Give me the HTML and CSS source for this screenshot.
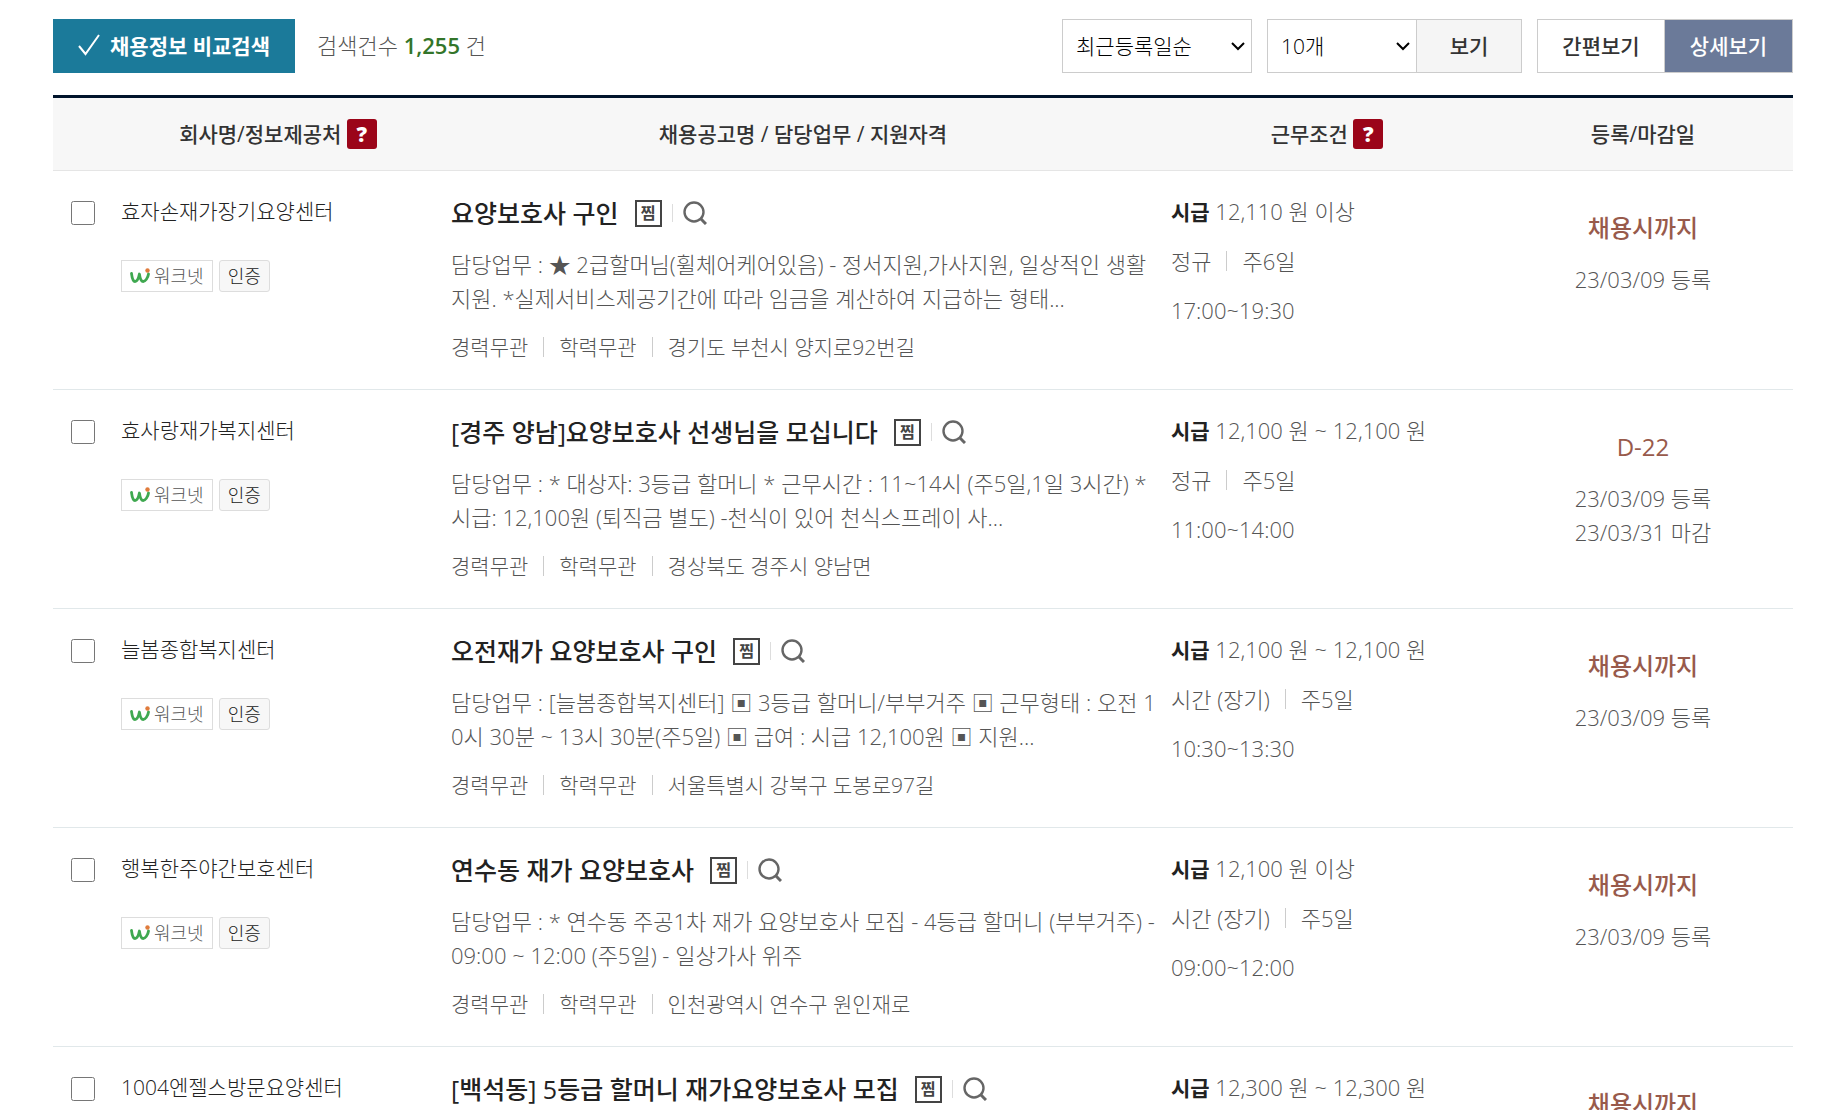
FILE: index.html
```html
<!DOCTYPE html>
<html lang="ko">

<head>
    <meta charset="UTF-8">
    <meta name="viewport" content="width=device-width, initial-scale=1.0">
    <title>채용정보 검색</title>
    <link rel="stylesheet" href="styles.css">
</head>

<body>
    <svg class="sprite" aria-hidden="true">
        <symbol id="ico-worknet" viewBox="0 0 20 16">
            <path d="M1.500 5.500C2 9.500 3.200 13.500 5 13.500S8.600 10 9.400 6C10 10 11.200 13.500 13.200 13.500S18 10 18.500 6" fill="none" stroke="#3fa850" stroke-width="2.800" stroke-linecap="round" stroke-linejoin="round"/>
            <circle cx="17.500" cy="2.500" r="2.200" fill="#e07b3c"/>
        </symbol>
        <symbol id="ico-search" viewBox="0 0 24 24">
            <circle cx="11" cy="11" r="9.500" fill="none" stroke="#666" stroke-width="2.400"/>
            <path d="M17.500 17.500L23 23" stroke="#666" stroke-width="3"/>
        </symbol>
    </svg>

    <div class="container">
        <div class="toolbar">
            <button type="button" class="btn-compare">
                <svg width="22" height="22" viewBox="0 0 22 22" aria-hidden="true"><path d="M1 12L7.500 20L21 1" fill="none" stroke="#fff" stroke-width="2"/></svg>
                채용정보 비교검색
            </button>
            <p class="total">검색건수 <strong>1,255</strong> 건</p>
            <div class="tools">
                <select class="sort" aria-label="정렬 순서">
                    <option>최근등록일순</option>
                </select>
                <div class="group">
                    <select class="count" aria-label="목록 개수">
                        <option>10개</option>
                    </select>
                    <button type="button" class="btn-view">보기</button>
                </div>
                <div class="group">
                    <button type="button" class="btn-tab">간편보기</button>
                    <button type="button" class="btn-tab active">상세보기</button>
                </div>
            </div>
        </div>

        <table class="list">
            <colgroup>
                <col class="col-check">
                <col class="col-company">
                <col class="col-title">
                <col class="col-cond">
                <col class="col-date">
            </colgroup>
            <thead>
                <tr>
                    <td></td>
                    <th scope="col">회사명/정보제공처 <button type="button" class="help">?</button></th>
                    <th scope="col">채용공고명 / 담당업무 / 지원자격</th>
                    <th scope="col">근무조건 <button type="button" class="help">?</button></th>
                    <th scope="col">등록/마감일</th>
                </tr>
            </thead>
            <tbody>
                <tr>
                    <td class="check"><input type="checkbox" aria-label="효자손재가장기요양센터 선택"></td>
                    <td class="company">
                        <a href="#">효자손재가장기요양센터</a>
                        <p class="badges"><span class="worknet"><svg width="20" height="16"><use href="#ico-worknet"/></svg>워크넷</span><span class="cert">인증</span></p>
                    </td>
                    <td class="job">
                        <div class="job-title"><a href="#">요양보호사 구인</a><button type="button" class="zzim">찜</button><i class="bar"></i><button type="button" class="search" aria-label="미리보기"><svg width="24" height="24"><use href="#ico-search"/></svg></button></div>
                        <p class="desc">담당업무 : ★ 2급할머님(휠체어케어있음) - 정서지원,가사지원, 일상적인 생활<br>지원. *실제서비스제공기간에 따라 임금을 계산하여 지급하는 형태...</p>
                        <p class="meta"><span>경력무관</span><span>학력무관</span><span>경기도 부천시 양지로92번길</span></p>
                    </td>
                    <td class="cond">
                        <p><strong>시급</strong> 12,110 원 이상</p>
                        <p class="meta"><span>정규</span><span>주6일</span></p>
                        <p>17:00~19:30</p>
                    </td>
                    <td class="date">
                        <strong>채용시까지</strong>
                        <p>23/03/09 등록</p>
                    </td>
                </tr>
                <tr>
                    <td class="check"><input type="checkbox" aria-label="효사랑재가복지센터 선택"></td>
                    <td class="company">
                        <a href="#">효사랑재가복지센터</a>
                        <p class="badges"><span class="worknet"><svg width="20" height="16"><use href="#ico-worknet"/></svg>워크넷</span><span class="cert">인증</span></p>
                    </td>
                    <td class="job">
                        <div class="job-title"><a href="#">[경주 양남]요양보호사 선생님을 모십니다</a><button type="button" class="zzim">찜</button><i class="bar"></i><button type="button" class="search" aria-label="미리보기"><svg width="24" height="24"><use href="#ico-search"/></svg></button></div>
                        <p class="desc">담당업무 : * 대상자: 3등급 할머니 * 근무시간 : 11~14시 (주5일,1일 3시간) *<br>시급: 12,100원 (퇴직금 별도) -천식이 있어 천식스프레이 사...</p>
                        <p class="meta"><span>경력무관</span><span>학력무관</span><span>경상북도 경주시 양남면</span></p>
                    </td>
                    <td class="cond">
                        <p><strong>시급</strong> 12,100 원 ~ 12,100 원</p>
                        <p class="meta"><span>정규</span><span>주5일</span></p>
                        <p>11:00~14:00</p>
                    </td>
                    <td class="date">
                        <strong>D-22</strong>
                        <p>23/03/09 등록</p>
                        <p>23/03/31 마감</p>
                    </td>
                </tr>
                <tr>
                    <td class="check"><input type="checkbox" aria-label="늘봄종합복지센터 선택"></td>
                    <td class="company">
                        <a href="#">늘봄종합복지센터</a>
                        <p class="badges"><span class="worknet"><svg width="20" height="16"><use href="#ico-worknet"/></svg>워크넷</span><span class="cert">인증</span></p>
                    </td>
                    <td class="job">
                        <div class="job-title"><a href="#">오전재가 요양보호사 구인</a><button type="button" class="zzim">찜</button><i class="bar"></i><button type="button" class="search" aria-label="미리보기"><svg width="24" height="24"><use href="#ico-search"/></svg></button></div>
                        <p class="desc">담당업무 : [늘봄종합복지센터] ▣ 3등급 할머니/부부거주 ▣ 근무형태 : 오전 1<br>0시 30분 ~ 13시 30분(주5일) ▣ 급여 : 시급 12,100원 ▣ 지원...</p>
                        <p class="meta"><span>경력무관</span><span>학력무관</span><span>서울특별시 강북구 도봉로97길</span></p>
                    </td>
                    <td class="cond">
                        <p><strong>시급</strong> 12,100 원 ~ 12,100 원</p>
                        <p class="meta"><span>시간 (장기)</span><span>주5일</span></p>
                        <p>10:30~13:30</p>
                    </td>
                    <td class="date">
                        <strong>채용시까지</strong>
                        <p>23/03/09 등록</p>
                    </td>
                </tr>
                <tr>
                    <td class="check"><input type="checkbox" aria-label="행복한주야간보호센터 선택"></td>
                    <td class="company">
                        <a href="#">행복한주야간보호센터</a>
                        <p class="badges"><span class="worknet"><svg width="20" height="16"><use href="#ico-worknet"/></svg>워크넷</span><span class="cert">인증</span></p>
                    </td>
                    <td class="job">
                        <div class="job-title"><a href="#">연수동 재가 요양보호사</a><button type="button" class="zzim">찜</button><i class="bar"></i><button type="button" class="search" aria-label="미리보기"><svg width="24" height="24"><use href="#ico-search"/></svg></button></div>
                        <p class="desc">담당업무 : * 연수동 주공1차 재가 요양보호사 모집 - 4등급 할머니 (부부거주) -<br>09:00 ~ 12:00 (주5일) - 일상가사 위주</p>
                        <p class="meta"><span>경력무관</span><span>학력무관</span><span>인천광역시 연수구 원인재로</span></p>
                    </td>
                    <td class="cond">
                        <p><strong>시급</strong> 12,100 원 이상</p>
                        <p class="meta"><span>시간 (장기)</span><span>주5일</span></p>
                        <p>09:00~12:00</p>
                    </td>
                    <td class="date">
                        <strong>채용시까지</strong>
                        <p>23/03/09 등록</p>
                    </td>
                </tr>
                <tr>
                    <td class="check"><input type="checkbox" aria-label="1004엔젤스방문요양센터 선택"></td>
                    <td class="company">
                        <a href="#">1004엔젤스방문요양센터</a>
                    </td>
                    <td class="job">
                        <div class="job-title"><a href="#">[백석동] 5등급 할머니 재가요양보호사 모집</a><button type="button" class="zzim">찜</button><i class="bar"></i><button type="button" class="search" aria-label="미리보기"><svg width="24" height="24"><use href="#ico-search"/></svg></button></div>
                    </td>
                    <td class="cond">
                        <p><strong>시급</strong> 12,300 원 ~ 12,300 원</p>
                    </td>
                    <td class="date">
                        <strong>채용시까지</strong>
                    </td>
                </tr>
            </tbody>
        </table>
    </div>
</body>

</html>
```
FILE: styles.css
```css
:root {
    --text: #333;
    --sub: #555;
    --line: #ccc;
    --row-line: #e1e8ea;
}

* {
    box-sizing: border-box;
}

body {
    margin: 0;
    background: #fff;
    color: var(--sub);
    font-family: "Open Sans", "Noto Sans CJK KR", sans-serif;
    font-size: 22px;
    font-weight: 300;
    line-height: 34px;
}

/* scrolls without a visible bar */
html {
    scrollbar-width: none;
}

p {
    margin: 0;
}

a {
    color: #222;
    text-decoration: none;
}

button,
select {
    margin: 0;
    font-family: inherit;
    font-size: 21px;
    cursor: pointer;
}

.sprite {
    display: none;
}

.container {
    padding: 19px 36px 0 53px;
}

/* toolbar */
.toolbar {
    display: flex;
    align-items: center;
    margin-bottom: 22px;
}

.btn-compare {
    display: flex;
    align-items: center;
    gap: 10px;
    height: 54px;
    padding: 0 25px 2px;
    border: 0;
    background: #1b7a9a;
    color: #fff;
    font-weight: 700;
}

.total {
    margin-left: 22px;
    padding-bottom: 2px;
}

.total strong {
    color: #33752a;
    font-weight: 600;
}

.tools {
    display: flex;
    gap: 15px;
    margin-left: auto;
}

.group {
    display: flex;
}

select {
    height: 54px;
    padding: 0 13px;
    border: 1px solid var(--line);
    border-radius: 0;
    appearance: none;
    background: #fff url("data:image/svg+xml,%3Csvg xmlns='http://www.w3.org/2000/svg' width='14' height='9'%3E%3Cpath d='M1 1l6 6 6-6' fill='none' stroke='%23000' stroke-width='2'/%3E%3C/svg%3E") no-repeat right 6px center;
    color: #000;
    font-weight: 300;
}

.sort {
    width: 190px;
}

.count {
    width: 149px;
    border-right: 0;
}

.btn-view,
.btn-tab {
    height: 54px;
    padding: 0 0 3px;
    border: 1px solid var(--line);
    color: var(--text);
    font-weight: 500;
}

.btn-view {
    width: 106px;
    background: #f5f5f5;
}

.btn-tab {
    width: 128px;
    background: #fff;
}

.btn-tab.active {
    border-left: 0;
    background: #6b7a99;
    color: #fff;
}

/* list */
.list {
    width: 100%;
    border-collapse: collapse;
    border-top: 3px solid #00142b;
    table-layout: fixed;
}

.col-check {
    width: 58px;
}

.col-company {
    width: 334px;
}

.col-cond {
    width: 332px;
}

.col-date {
    width: 300px;
}

thead tr {
    height: 74px;
    border-bottom: 1px solid #e5e5e5;
    background: #f7f7f7;
}

th {
    padding: 0;
    color: var(--text);
    font-size: 21px;
    font-weight: 500;
}

.help {
    width: 30px;
    height: 30px;
    padding: 0;
    border: 0;
    border-radius: 3px;
    background: #9b0519;
    color: #fff;
    font-weight: 800;
    line-height: 30px;
}

tbody tr {
    height: 219px;
    border-bottom: 1px solid var(--row-line);
}

tbody td {
    padding: 23px 10px 0;
    vertical-align: top;
    white-space: nowrap;
}

.check input {
    display: block;
    width: 24px;
    height: 24px;
    margin: 7px 0 0 8px;
}

.company {
    font-size: 21px;
}

.badges {
    display: flex;
    gap: 6px;
    margin-top: 32px;
    font-size: 18px;
    line-height: 30px;
}

.worknet,
.cert {
    display: flex;
    align-items: center;
    padding: 0 8px;
    border: 1px solid #ddd;
}

.worknet {
    gap: 4px;
}

.cert {
    border-radius: 3px;
    background: #f7f7f7;
    color: #222;
}

.list .job {
    padding: 24px 6px 0;
}

.job-title {
    display: flex;
    align-items: center;
    height: 36px;
    font-size: 25px;
    font-weight: 500;
}

.zzim {
    width: 27px;
    height: 27px;
    margin-left: 16px;
    padding: 0;
    border: 2px solid #444;
    background: #fff;
    color: #444;
    font-size: 16px;
    font-weight: 700;
    line-height: 22px;
}

.bar {
    width: 1px;
    height: 18px;
    margin: 0 10px;
    background: #ddd;
}

.search {
    display: flex;
    padding: 0;
    border: 0;
    background: none;
}

.desc {
    margin-top: 16px;
}

.meta {
    display: flex;
    align-items: center;
}

.meta span + span {
    display: flex;
    align-items: center;
}

.meta span + span::before {
    content: "";
    width: 1px;
    height: 20px;
    margin: 0 15px;
    background: #ccc;
}

.job .meta {
    margin-top: 15px;
    font-size: 21px;
}

.cond p + p {
    margin-top: 15px;
}

.cond strong {
    color: #222;
    font-size: 21px;
    font-weight: 700;
}

.date {
    text-align: center;
}

.date strong {
    display: block;
    margin: 17px 0;
    color: #985a4b;
    font-size: 24px;
    font-weight: 500;
}
```
